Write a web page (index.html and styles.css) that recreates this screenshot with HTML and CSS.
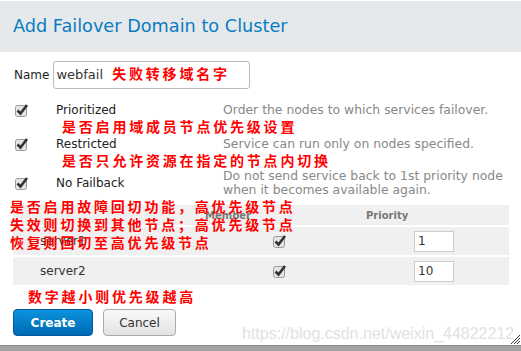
FILE: index.html
```html
<!DOCTYPE html>
<html lang="en">
<head>
  <meta charset="UTF-8" />
  <title>Add Failover Domain to Cluster</title>
  <link rel="stylesheet" href="styles.css">
</head>
<body>
  <div class="dialog">
    <h2 class="head">Add Failover Domain to Cluster</h2>

    <div class="body">
      <div class="name-row">
        <label>Name</label>
        <div class="text-input">webfail <span class="note">失败转移域名字</span></div>
      </div>

      <div class="option first">
        <span class="check"><svg width="15" height="14" viewBox="0 0 15 14"><rect x="0.5" y="2.5" width="11" height="11" rx="2" fill="#e4e4e4" stroke="#9a9a9a"/><path d="M2.5 7.5 L5.5 10.5 L12 2" fill="none" stroke="#333" stroke-width="2.6"/></svg></span>
        <span class="label">Prioritized</span>
        <span class="desc">Order the nodes to which services failover.</span>
        <span class="note sub">是否启用域成员节点优先级设置</span>
      </div>

      <div class="option">
        <span class="check"><svg width="15" height="14" viewBox="0 0 15 14"><rect x="0.5" y="2.5" width="11" height="11" rx="2" fill="#e4e4e4" stroke="#9a9a9a"/><path d="M2.5 7.5 L5.5 10.5 L12 2" fill="none" stroke="#333" stroke-width="2.6"/></svg></span>
        <span class="label">Restricted</span>
        <span class="desc">Service can run only on nodes specified.</span>
        <span class="note sub">是否只允许资源在指定的节点内切换</span>
      </div>

      <div class="option last">
        <span class="check"><svg width="15" height="14" viewBox="0 0 15 14"><rect x="0.5" y="2.5" width="11" height="11" rx="2" fill="#e4e4e4" stroke="#9a9a9a"/><path d="M2.5 7.5 L5.5 10.5 L12 2" fill="none" stroke="#333" stroke-width="2.6"/></svg></span>
        <span class="label">No Failback</span>
        <span class="desc">Do not send service back to 1st priority node<br>when it becomes available again.</span>
      </div>

      <div class="members">
        <div class="note overlay">是否启用故障回切功能，高优先级节点<br>失效则切换到其他节点；高优先级节点<br>恢复则回切至高优先级节点</div>
        <div class="row head-row">
          <span></span>
          <span>Member</span>
          <span>Priority</span>
        </div>
        <div class="row">
          <span class="node">server1</span>
          <span class="cell-check"><svg width="15" height="14" viewBox="0 0 15 14"><rect x="0.5" y="2.5" width="11" height="11" rx="2" fill="#e4e4e4" stroke="#9a9a9a"/><path d="M2.5 7.5 L5.5 10.5 L12 2" fill="none" stroke="#333" stroke-width="2.6"/></svg></span>
          <span class="cell-prio"><span class="prio-input">1</span></span>
        </div>
        <div class="row">
          <span class="node">server2</span>
          <span class="cell-check"><svg width="15" height="14" viewBox="0 0 15 14"><rect x="0.5" y="2.5" width="11" height="11" rx="2" fill="#e4e4e4" stroke="#9a9a9a"/><path d="M2.5 7.5 L5.5 10.5 L12 2" fill="none" stroke="#333" stroke-width="2.6"/></svg></span>
          <span class="cell-prio"><span class="prio-input">10</span></span>
        </div>
      </div>

      <div class="note tip">数字越小则优先级越高</div>

      <div class="actions">
        <button type="button" class="btn primary">Create</button>
        <button type="button" class="btn">Cancel</button>
      </div>
    </div>

    <div class="watermark">https://blog.csdn.net/weixin_44822212</div>
    <svg class="grip" width="11" height="11" viewBox="0 0 11 11"><path d="M1 10 L10 1 M4 10 L10 4 M7 10 L10 7" stroke="#333" stroke-width="1"/></svg>
  </div>
  <div class="statusbar"></div>
</body>
</html>
```

FILE: styles.css
```css
body {
  margin: 0;
  font-family: 'DejaVu Sans', sans-serif;
  color: #333;
  background: #fff;
  font-size: 12px;
}
.dialog { position: relative; height: 345px; overflow: hidden; }
.head {
  margin: 1px 0 0;
  height: 51px;
  box-sizing: border-box;
  padding: 15px 13px 0;
  background: #e6e9ec;
  color: #0a7cc0;
  font-size: 17.7px;
  font-weight: normal;
}
.body { padding: 9px 12px 0 13px; }

.note {
  color: #f00;
  font-family: 'Noto Sans CJK SC', sans-serif;
  font-weight: bold;
  font-size: 14px;
  letter-spacing: 2.8px;
  line-height: 16px;
}

.name-row { display: flex; align-items: center; gap: 4px; }
.name-row label { color: #222; padding-left: 1px; }
.text-input {
  width: 197px; height: 28px; box-sizing: border-box;
  border: 1px solid #bbb; border-radius: 3px;
  padding: 0 2px; line-height: 26px; font-size: 13px; color: #333;
}
.text-input .note { margin-left: 5px; }

.option {
  display: grid;
  grid-template-columns: 43px 167px 1fr;
  align-items: center;
  margin-top: 2px;
}
.option.first { margin-top: 13px; }
.option.last { margin-top: 1px; }
.option .check { padding-left: 2px; height: 14px; }
.option .label { color: #222; line-height: 16px; }
.option .desc { color: #888; font-size: 12.4px; line-height: 14px; }
.option .sub { grid-column: 2 / 4; padding-left: 6px; }

.members { position: relative; margin-top: 8px; }
.members .overlay { position: absolute; left: -3px; top: -8px; line-height: 18px; }
.row {
  display: grid;
  grid-template-columns: 192px 161px 1fr;
  align-items: center;
  background: #f0f0f0;
  height: 28px;
  margin-bottom: 2px;
}
.row.head-row { height: 20px; font-size: 10px; font-weight: bold; color: #777; }
.node { padding-left: 27px; color: #333; }
.cell-check { padding-left: 68px; height: 14px; }
.cell-prio { padding-left: 48px; }
.prio-input {
  display: block; width: 40px; height: 21px; box-sizing: border-box;
  border: 1px solid #ccc; background: #fff;
  padding-left: 3px; line-height: 19px; font-size: 12px;
}

.tip { margin: 2px 0 0 15px; line-height: 18px; }

.actions { display: flex; gap: 10px; margin-top: 4px; }
.btn {
  font-family: 'DejaVu Sans', sans-serif;
  font-size: 12px;
  height: 27px;
  width: 73px;
  padding: 0;
  border-radius: 4px;
  border: 1px solid #aaa;
  background: linear-gradient(#fafafa, #e2e2e2);
  color: #333;
}
.btn.primary {
  width: 80px;
  border-color: #04599a;
  background: linear-gradient(#0b93dd, #0069b3);
  color: #fff;
  font-weight: bold;
}

.watermark {
  position: absolute; left: 242px; top: 325px;
  font-family: 'Liberation Sans', sans-serif;
  font-size: 16px; line-height: 18px; color: #e2e2e2;
}
.grip { position: absolute; right: 0; bottom: 0; }
.statusbar { height: 6px; background: #a4a4a4; border-top: 1px solid #8a8a8a; box-sizing: border-box; }
```
